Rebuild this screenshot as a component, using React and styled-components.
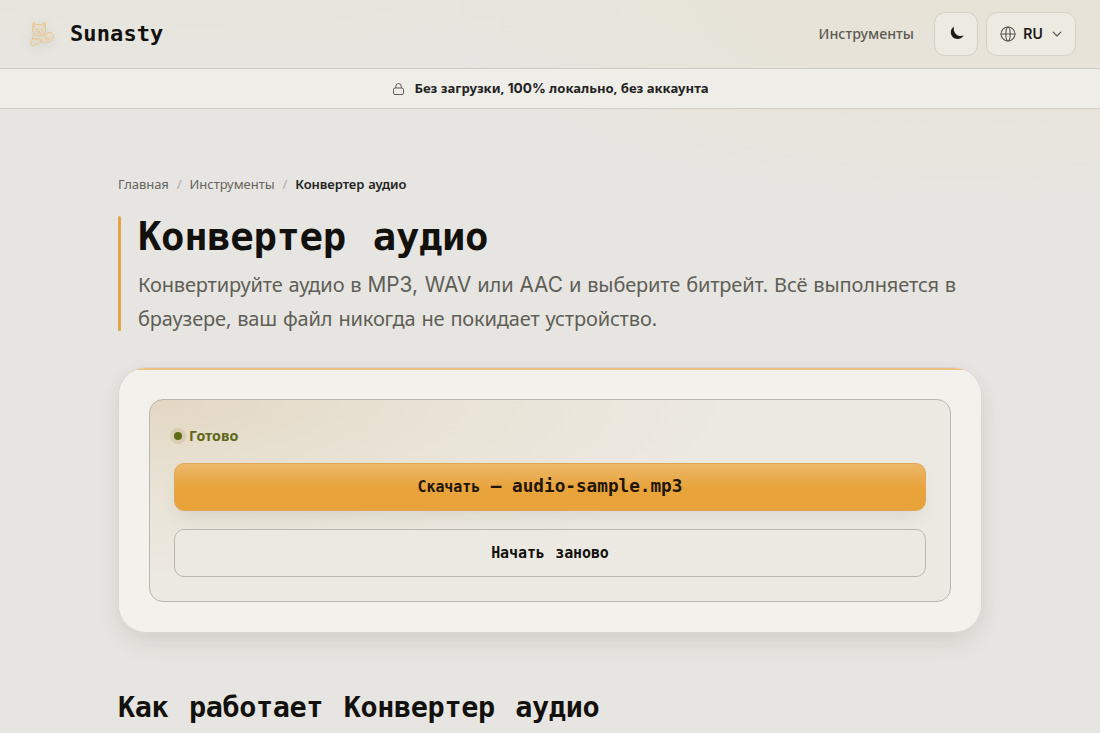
import React from "react";
import styled, { createGlobalStyle, css } from "styled-components";

const sans = `"Noto Sans", "Open Sans", sans-serif`;
const mono = `"DejaVu Sans Mono", "Liberation Mono", monospace`;

const GlobalStyle = createGlobalStyle`
  * {
    box-sizing: border-box;
  }
  body {
    margin: 0;
    height: 733px;
    overflow: hidden;
    color: #12110e;
    font-family: ${sans};
    background:
      radial-gradient(ellipse 520px 205px at 960px 0px, rgba(232, 225, 207, 0.6), rgba(231, 226, 212, 0.5) 60%, transparent 100%),
      radial-gradient(ellipse 600px 75px at 200px 0px, rgba(230, 229, 216, 0.6), transparent 100%),
      #e6e5e1;
  }
`;

const Header = styled.header`
  display: flex;
  align-items: center;
  justify-content: space-between;
  height: 69px;
  padding: 0 24px 1px 26px;
  border-bottom: 1px solid #cbcac5;
`;
const Brand = styled.a`
  display: flex;
  align-items: center;
  gap: 14px;
  font: 700 22px/30px ${mono};
  letter-spacing: 0.1px;
`;
const Logo = styled.svg`
  width: 30px;
  height: 30px;
  fill: rgba(240, 215, 175, 0.25);
  stroke: #ebbf85;
  stroke-width: 0.9;
  stroke-linecap: round;
  stroke-linejoin: round;
  filter: drop-shadow(0 3px 5px rgba(90, 90, 80, 0.2));
`;
const Nav = styled.nav`
  display: flex;
  align-items: center;
  gap: 8px;
`;
const NavLink = styled.a`
  margin-right: 12px;
  color: #5c5b53;
  font-size: 14.2px;
  font-weight: 500;
`;
const NavButton = styled.button`
  display: flex;
  align-items: center;
  justify-content: center;
  width: ${(props) => (props.wide ? "90px" : "44px")};
  height: 44px;
  padding: 0;
  border: 1px solid #d3d1c7;
  border-radius: 11px;
  background: #edeae2;
  color: #1b1a16;
  font: 600 14px Inter, sans-serif;

  svg {
    fill: none;
    stroke: #55544c;
    stroke-linecap: round;
    stroke-linejoin: round;
  }
`;
const Lang = styled.span`
  margin: 0 9px 0 7px;
`;
const Banner = styled.div`
  display: flex;
  align-items: center;
  justify-content: center;
  gap: 9px;
  height: 40px;
  padding-left: 1px;
  border-bottom: 1px solid #cfcec9;
  background: #eeede8;
  color: #23221e;
  font-size: 13.1px;
  font-weight: 700;
`;
const BannerText = styled.span`
  padding-bottom: 2px;
`;
const Latin = styled.span`
  font-family: Inter, sans-serif;
  font-size: 1.04em;
  letter-spacing: 0;
`;
const Main = styled.main`
  width: 864px;
  margin: 0 auto;
  padding-top: 65px;
`;
const Crumbs = styled.div`
  display: flex;
  gap: 8px;
  height: 20px;
  color: #65645c;
  font-size: 13px;
  line-height: 20px;
  letter-spacing: -0.05px;
  word-spacing: 0.5px;
`;
const Slash = styled.span`
  color: #aaa9a1;
`;
const Current = styled.span`
  color: #23221e;
  font-weight: 600;
`;
const Hero = styled.section`
  position: relative;
  height: 115px;
  margin-top: 22px;
  padding-left: 20px;

  &::before {
    content: "";
    position: absolute;
    left: 0;
    top: 0;
    width: 3px;
    height: 100%;
    border-radius: 2px;
    background: #e2a347;
  }
`;
const Title = styled.h1`
  margin: 0;
  font: 700 39px/42px ${mono};
  letter-spacing: -0.4px;
  word-spacing: 4px;
`;
const Lead = styled.p`
  margin: 10px 0 0;
  color: #5f5e56;
  font-size: 20px;
  line-height: 34px;
  letter-spacing: -0.15px;
  word-spacing: 0.95px;
  white-space: nowrap;
`;
const Shadow = styled.div`
  margin-top: 36px;
  border-radius: 28px;
  box-shadow: 0 12px 28px -6px rgba(50, 50, 35, 0.12), 0 2px 20px rgba(50, 50, 35, 0.03);
`;
const Card = styled.section`
  position: relative;
  height: 266px;
  padding: 31px 30px;
  overflow: hidden;
  border: 1px solid #d8d6cf;
  border-radius: 28px;
  background: #f2f1ec;

  &::before {
    content: "";
    position: absolute;
    left: 0;
    right: 0;
    top: 0;
    height: 2px;
    background: #ebc181;
  }
`;
const Panel = styled.div`
  display: flex;
  flex-direction: column;
  height: 203px;
  padding: 24px;
  border: 1px solid #b8b6ae;
  border-radius: 14px;
  background:
    radial-gradient(ellipse 590px 180px at 0 0, rgba(222, 203, 175, 0.6), rgba(226, 218, 195, 0.4) 50%, transparent),
    #ece9e2;
`;
const Status = styled.div`
  display: flex;
  gap: 7px;
  height: 24px;
  color: #5d6717;
  font-size: 14.2px;
  font-weight: 700;
  line-height: 24px;

  &::before {
    content: "";
    width: 8px;
    height: 8px;
    margin-top: 8px;
    border-radius: 50%;
    background: #5b6d17;
    box-shadow: 0 0 0 4px #dacdb1;
  }
`;
const Button = styled.button`
  display: flex;
  align-items: center;
  justify-content: center;
  width: 100%;
  height: 48px;
  flex: none;
  padding: 0 0 1px;
  border: 1px solid #b8b6af;
  border-radius: 10px;
  background: #ece9e2;
  color: #12110e;
  font: 700 15px ${mono};
  letter-spacing: -0.1px;
  word-spacing: 1.5px;
  white-space: pre;
  ${(props) =>
    props.primary
      ? css`
          align-items: baseline;
          padding-top: 12px;
          margin-top: 15px;
          border-color: #e0a655;
          color: #1f1608;
          background: linear-gradient(#ecb869, #e8a33b 52%);
          box-shadow: 0 10px 18px -6px rgba(80, 85, 55, 0.13);
        `
      : css`
          margin-top: 18px;
        `}
`;
const FileName = styled.span`
  font-size: 17.7px;
  letter-spacing: 0;
  word-spacing: 0;
`;
const SectionTitle = styled.h2`
  margin: 56px 0 0;
  font: 700 28.5px/38px ${mono};
  letter-spacing: -0.38px;
  word-spacing: 3.8px;
  white-space: nowrap;
`;

function CatLogo() {
  return (
    <Logo viewBox="0 0 30 30">
      <path d="M6.8 10 7 3.2c1.4.4 2.6 1.3 3.4 2.6 1.6-.5 3.4-.5 5 0C16.3 4.5 17.5 3.6 19 3.2L19.4 10c.8 4-3 6.8-6.4 6.8S6 14 6.8 10Z" />
      <path d="M8 5.3l.4 2.3M18.2 5.3l-.5 2.3M9.4 10.3c.6.9 1.5.9 2 .2M15 10.5c.5.7 1.4.7 2-.2M12.5 12.3h1.2l-.6.8ZM11.3 14.4c.8.4 1.4.1 1.8-.6.4.7 1 1 1.8.6" />
      <path d="M7.6 15.2C6.8 17 6.5 18.6 6.3 20.3M18.5 15c.8 1.6 1.5 3.2 1.4 5" />
      <path d="M6.2 20.3c-2.2 1.5-2.5 5.7.8 6.3 2.8.2 4-2.6 6.7-3.2 3.7-.8 8.3 1 11.5-1.6 3.6-2.9 2.6-8-.7-8.4-2-.2-3.8 1-5 2.6" />
      <path d="M6.2 20.3c2.7-.9 5.3-.8 8-.1 1.5.4 1.5 2.4-.2 2.9M20 20c1.6.6 3.4.3 4.6-1" />
    </Logo>
  );
}

export default function App() {
  return (
    <>
      <GlobalStyle />
      <Header>
        <Brand>
          <CatLogo />
          Sunasty
        </Brand>
        <Nav>
          <NavLink>Инструменты</NavLink>
          <NavButton aria-label="Тема">
            <svg width="16" height="16" viewBox="0 0 16 16">
              <path
                d="M4.6 1C2.6 2.3 1.3 4.5 1.4 7.1c.2 3.7 3.1 6.5 6.7 6.5 2.6 0 4.9-1.3 6.1-3.4-1.4.5-2.9.6-4.3.3C6 9.7 3.4 5.4 4.6 1Z"
                fill="#1b1a16"
                stroke="none"
                transform="translate(1.4 -.6)"
              />
            </svg>
          </NavButton>
          <NavButton wide>
            <svg width="16" height="16" viewBox="0 0 16 16" strokeWidth="1.1">
              <circle cx="8" cy="8" r="7" />
              <ellipse cx="8" cy="8" rx="2.2" ry="7" />
              <path d="M1 8h14" />
            </svg>
            <Lang>RU</Lang>
            <svg width="10" height="10" viewBox="0 0 10 10" strokeWidth="1.1">
              <path d="m1.2 3.2 3.8 3.8 3.8-3.8" />
            </svg>
          </NavButton>
        </Nav>
      </Header>
      <Banner>
        <svg width="13" height="14" viewBox="0 0 13 14" fill="none" stroke="#5d5c54" strokeWidth="1">
          <rect x="1.5" y="6" width="10" height="6.5" rx="1.5" />
          <path d="M3.8 6V4.2a2.7 2.7 0 0 1 5.4 0V6" />
        </svg>
        <BannerText>
          Без загрузки, <Latin>100%</Latin> локально, без аккаунта
        </BannerText>
      </Banner>
      <Main>
        <Crumbs>
          <span>Главная</span>
          <Slash>/</Slash>
          <span>Инструменты</span>
          <Slash>/</Slash>
          <Current>Конвертер аудио</Current>
        </Crumbs>
        <Hero>
          <Title>Конвертер аудио</Title>
          <Lead>
            Конвертируйте аудио в <Latin>MP3, WAV</Latin> или <Latin>AAC</Latin> и выберите битрейт. Всё выполняется в
            <br />
            браузере, ваш файл никогда не покидает устройство.
          </Lead>
        </Hero>
        <Shadow>
          <Card>
            <Panel>
              <Status>Готово</Status>
              <Button primary>
                Скачать<FileName> — audio-sample.mp3</FileName>
              </Button>
              <Button>Начать заново</Button>
            </Panel>
          </Card>
        </Shadow>
        <SectionTitle>Как работает Конвертер аудио</SectionTitle>
      </Main>
    </>
  );
}
